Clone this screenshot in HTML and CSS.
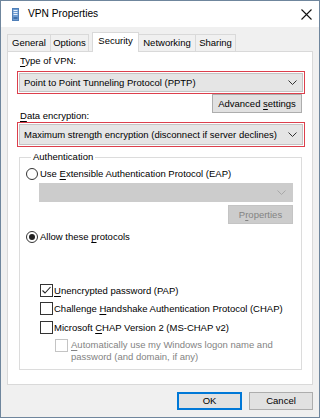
FILE: index.html
```html
<!DOCTYPE html>
<html>
<head>
<meta charset="utf-8">
<link rel="stylesheet" href="styles.css">
</head>
<body>
<div class="window">
  <div class="titlebar">
    <svg class="app-icon" width="7" height="13" viewBox="0 0 7 13">
      <rect x="0.5" y="0.5" width="6" height="12" fill="#6d9bd1" stroke="#4f7fb8"/>
      <rect x="1.5" y="2" width="4" height="1" fill="#e6f0fb"/>
      <rect x="1.5" y="4" width="4" height="1" fill="#e6f0fb"/>
      <rect x="1.5" y="6" width="4" height="1" fill="#e6f0fb"/>
      <rect x="1.5" y="9" width="4" height="2" fill="#3f6fa8"/>
    </svg>
    <span class="title">VPN Properties</span>
    <svg class="close" width="11" height="11" viewBox="0 0 11 11">
      <path d="M0.5 0.5 L10.5 10.5 M10.5 0.5 L0.5 10.5" stroke="#111" stroke-width="1.1" fill="none"/>
    </svg>
  </div>
  <div class="content">
    <div class="tabs">
      <div class="tab t-general">General</div>
      <div class="tab t-options">Options</div>
      <div class="tab t-security active">Security</div>
      <div class="tab t-networking">Networking</div>
      <div class="tab t-sharing">Sharing</div>
    </div>
    <div class="panel">
      <div class="label l1"><u>T</u>ype of VPN:</div>
      <div class="hl hl1">
        <div class="combo c1"><span>Point to Point Tunneling Protocol (PPTP)</span>
          <svg class="chev" width="9" height="5" viewBox="0 0 9 5"><path d="M0.5 0.5 L4.5 4.5 L8.5 0.5" stroke="#333" fill="none"/></svg>
        </div>
      </div>
      <div class="btn adv">Advanced <u>s</u>ettings</div>
      <div class="label l2"><u>D</u>ata encryption:</div>
      <div class="hl hl2">
        <div class="combo c2"><span>Maximum strength encryption (disconnect if server declines)</span>
          <svg class="chev" width="9" height="5" viewBox="0 0 9 5"><path d="M0.5 0.5 L4.5 4.5 L8.5 0.5" stroke="#333" fill="none"/></svg>
        </div>
      </div>
      <fieldset class="group">
        <legend>Authentication</legend>
        <div class="group-body">
          <div class="opt eap"><span class="radio"></span><span>Use <u>E</u>xtensible Authentication Protocol (EAP)</span></div>
          <div class="combo dis">
            <svg class="chev" width="9" height="5" viewBox="0 0 9 5"><path d="M0.5 0.5 L4.5 4.5 L8.5 0.5" stroke="#a8a8a8" fill="none"/></svg>
          </div>
          <div class="btn props">P<u>r</u>operties</div>
          <div class="opt allow"><span class="radio on"></span><span>Allow these <u>p</u>rotocols</span></div>
          <div class="opt chk pap"><span class="box"><svg width="11" height="11" viewBox="0 0 11 11"><path d="M1.5 5.5 L4 8 L9.5 2" stroke="#222" stroke-width="1.1" fill="none"/></svg></span><span><u>U</u>nencrypted password (PAP)</span></div>
          <div class="opt chk chap"><span class="box"></span><span>Challenge <u>H</u>andshake Authentication Protocol (CHAP)</span></div>
          <div class="opt chk ms"><span class="box"></span><span>Microsoft <u>C</u>HAP Version 2 (MS-CHAP v2)</span></div>
          <div class="opt chk auto"><span class="box dbox"></span><span class="dtext"><u>A</u>utomatically use my Windows logon name and<br>password (and domain, if any)</span></div>
        </div>
      </fieldset>
    </div>
    <div class="footer">
      <div class="btn ok">OK</div>
      <div class="btn cancel">Cancel</div>
    </div>
  </div>
</div>
</body>
</html>
```
FILE: styles.css
```css
* { box-sizing: border-box; }
html, body { margin: 0; padding: 0; }
body {
  width: 320px;
  height: 418px;
  font-family: "Liberation Sans", Arial, sans-serif;
  font-size: 9.5px;
  line-height: 12px;
  color: #000;
  background: #f0f0f0;
}
u { text-decoration-thickness: 1px; text-underline-offset: 1.5px; }
.window {
  width: 320px;
  height: 418px;
  border: 1px solid #6f869d;
  background: #f0f0f0;
  display: flex;
  flex-direction: column;
}
.titlebar {
  height: 26px;
  background: #fff;
  display: flex;
  align-items: center;
  padding-left: 11px;
}
.app-icon { margin-top: 1px; }
.title {
  margin-left: 9px;
  font-size: 10.2px;
  flex: 1;
}
.close { margin-right: 7px; }
.content {
  padding: 0 6px;
  flex: 1;
  display: flex;
  flex-direction: column;
}
.tabs {
  margin-top: 5px;
  height: 20px;
  display: flex;
  align-items: flex-start;
  position: relative;
  z-index: 1;
}
.tab {
  height: 17px;
  margin-top: 2px;
  border: 1px solid #d9d9d9;
  border-bottom: none;
  background: #f0f0f0;
  text-align: center;
  line-height: 16px;
}
.t-general { width: 44px; }
.t-options { width: 39px; margin-left: -1px; }
.t-security { width: 47px; margin-left: 3px; }
.t-networking { width: 58px; margin-left: -1px; }
.t-sharing { width: 41px; margin-left: -1px; }
.tab.active {
  height: 20px;
  margin-top: 0;
  background: #fff;
  line-height: 16px;
  position: relative;
}
.panel {
  margin-top: -1px;
  width: 306px;
  background: #fff;
  border: 1px solid #d9d9d9;
  padding: 3px 7px 14px 9px;
  display: flex;
  flex-direction: column;
}
.label { margin-left: 3px; height: 12px; }
.l2 { margin-top: -3px; }
.hl {
  border: 1px solid #dc3f4c;
  padding: 1px;
  background: #fff;
}
.hl1 { margin-top: 4px; }
.combo {
  background: #e5e5e5;
  border: 1px solid #c4c4c4;
  display: flex;
  align-items: center;
  padding-left: 4px;
  padding-right: 5px;
}
.combo span { flex: 1; white-space: nowrap; }
.c1 { height: 19px; }
.c2 { height: 21px; }
.btn {
  height: 19px;
  background: #e1e1e1;
  border: 1px solid #adadad;
  text-align: center;
  line-height: 17px;
}
.adv {
  align-self: flex-end;
  width: 90px;
  margin-right: 3px;
}
.group {
  margin: 4px 3px 0 2px;
  border: 1px solid #dcdcdc;
  padding: 5px 0 6px 6px;
  min-width: 0;
}
.group legend {
  padding: 0 2px;
  margin-left: 5px;
  line-height: 12px;
}
.group-body {
  display: flex;
  flex-direction: column;
}
.opt {
  display: flex;
  align-items: center;
  height: 12px;
  white-space: nowrap;
}
.radio {
  width: 12px;
  height: 12px;
  border: 1px solid #333;
  border-radius: 50%;
  background: #fff;
  margin-right: 2px;
  display: flex;
  align-items: center;
  justify-content: center;
  flex: none;
}
.radio.on::after {
  content: "";
  width: 6px;
  height: 6px;
  border-radius: 50%;
  background: #222;
}
.combo.dis {
  height: 19px;
  margin: 3px 8px 0 13px;
  background: #cccccc;
  border-color: #cccccc;
  justify-content: flex-end;
  padding-right: 6px;
}
.props {
  align-self: flex-end;
  width: 65px;
  margin: 3px 8px 0 0;
  background: #cccccc;
  border-color: #c4c4c4;
  color: #838383;
}
.allow { margin-top: 7px; }
.chk { height: 13px; margin-left: 14px; }
.box {
  width: 13px;
  height: 13px;
  border: 1px solid #333;
  background: #fff;
  margin-right: 1px;
  display: flex;
  align-items: center;
  justify-content: center;
  flex: none;
}
.pap { margin-top: 41px; }
.chap { margin-top: 5px; }
.ms { margin-top: 6px; }
.auto {
  margin-top: 5px;
  margin-left: 29px;
  height: auto;
  align-items: flex-start;
}
.dbox { border-color: #c4c4c4; margin-right: 3px; }
.dtext { color: #838383; line-height: 12px; }
.footer {
  margin-top: 7px;
  display: flex;
  justify-content: flex-end;
  gap: 7px;
  width: 306px;
}
.ok {
  width: 65px;
  height: 18px;
  border: 1px solid #0078d7;
  box-shadow: inset 0 0 0 1px #0078d7;
  line-height: 16px;
}
.cancel {
  width: 64px;
  height: 18px;
  line-height: 16px;
}
```
